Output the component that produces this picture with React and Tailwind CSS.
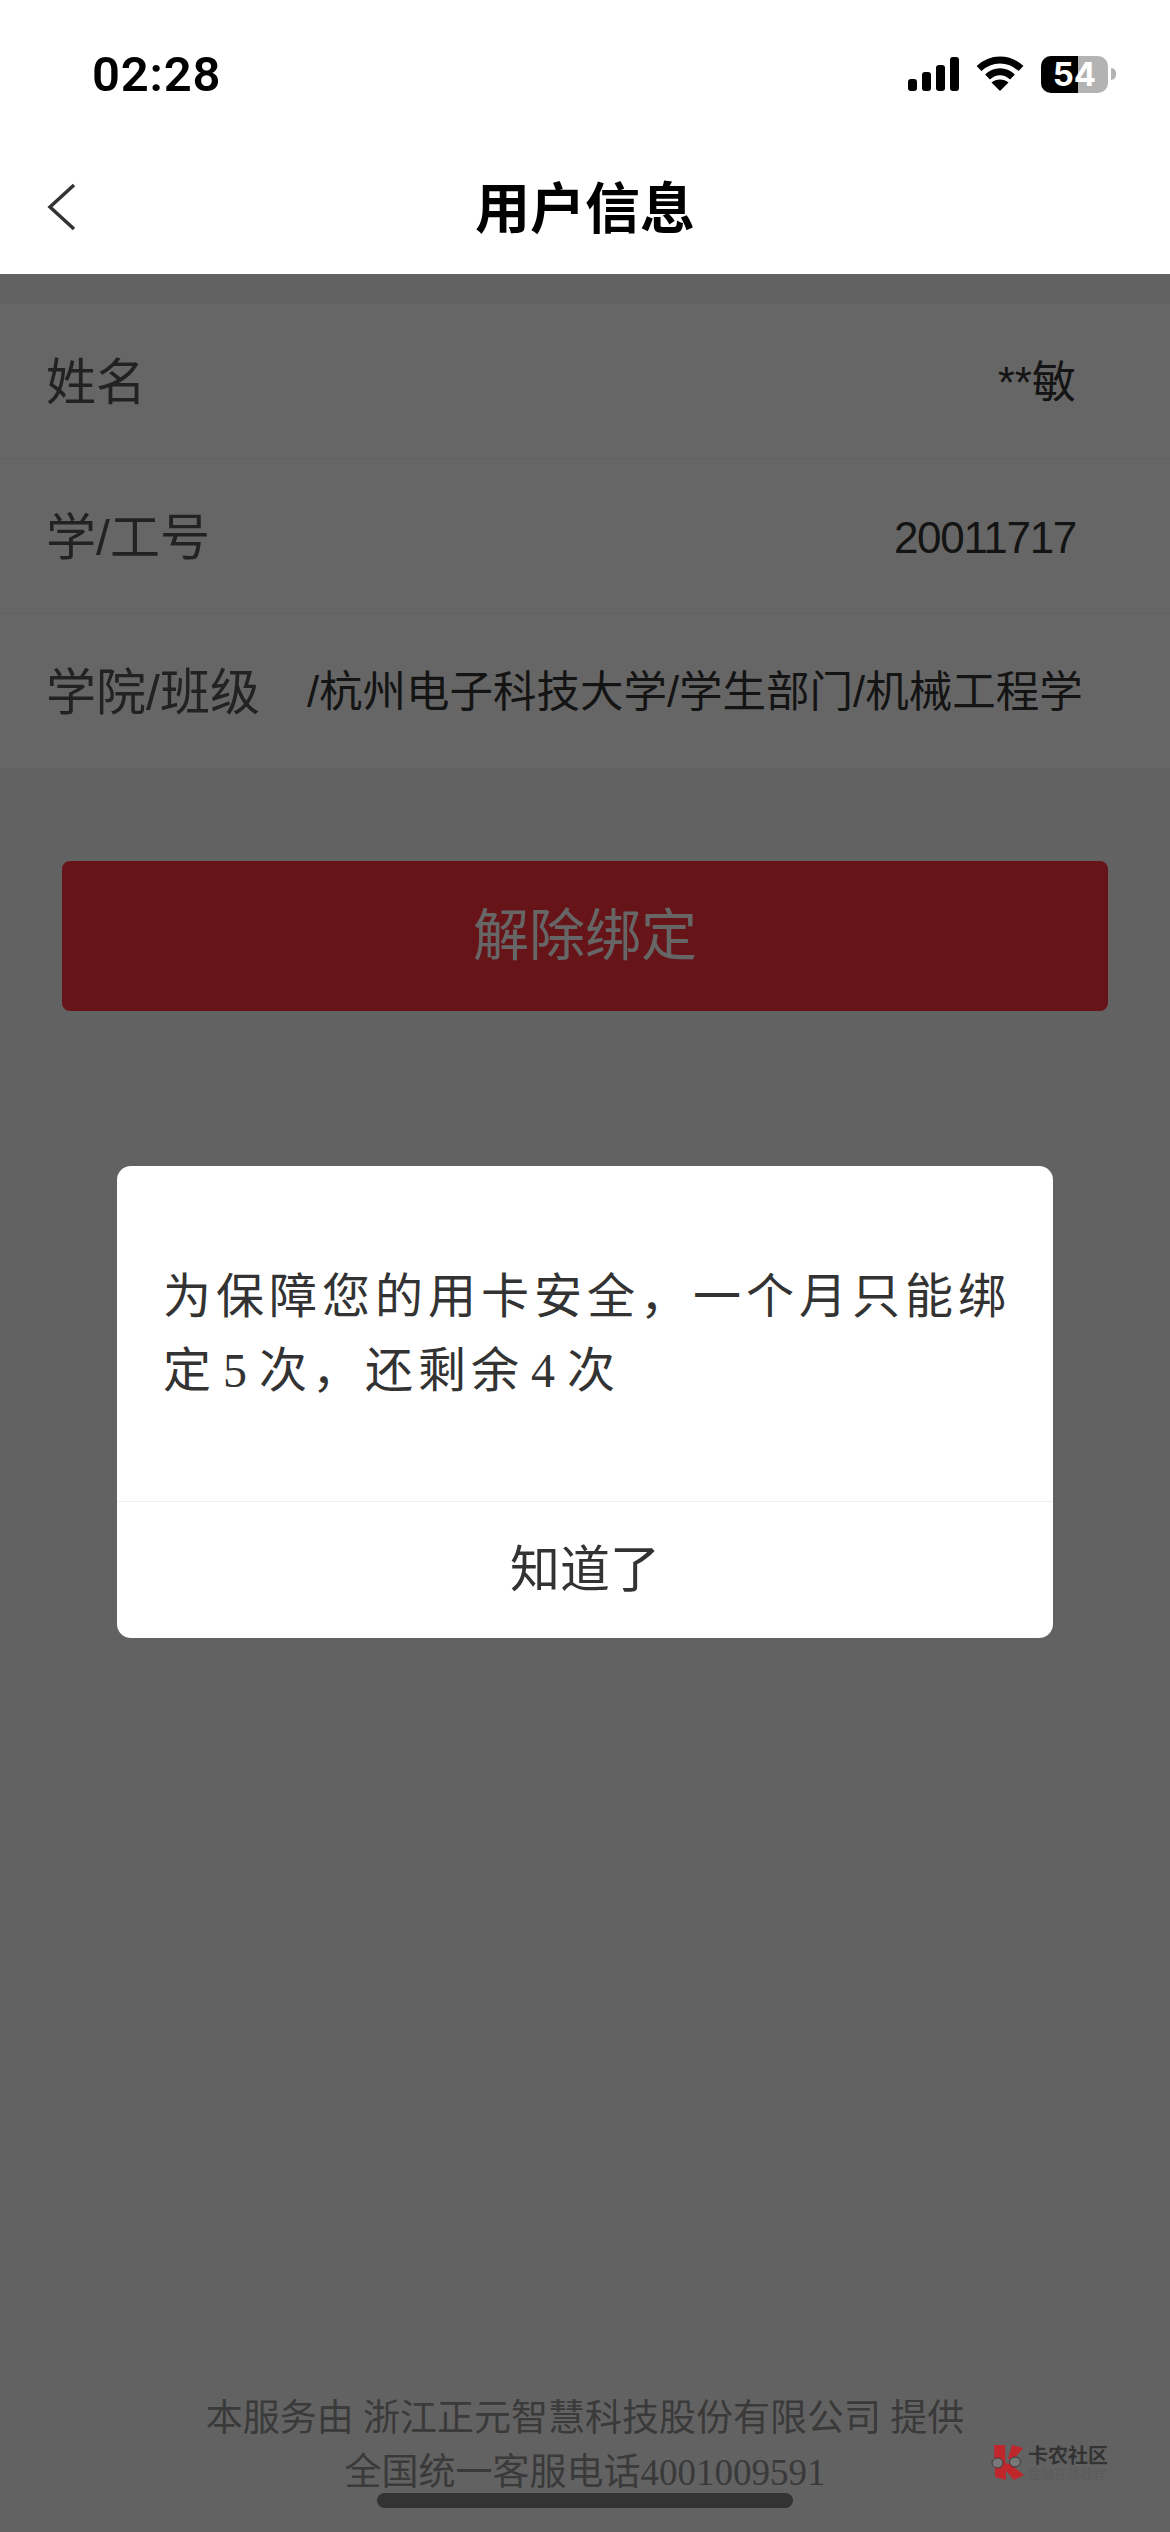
const CJK = 'font-["Liberation_Sans","Noto_Sans_CJK_SC",sans-serif]';

function InfoRow({ label, value, wide, digits }) {
  let valueClass = 'text-[44px] text-[#333]';
  if (wide) valueClass = 'ml-[47px] -mr-[3px] min-w-0 flex-1 whitespace-nowrap text-[43.5px] text-[#333]';
  if (digits) valueClass = 'text-[44px] tracking-[-1.3px] text-[#333]';
  return (
    <div className="flex h-[155px] items-center justify-between border-b border-[#f2f2f2] bg-white pl-[46px] pr-[94px] pt-[4px]">
      <span className="shrink-0 text-[50px] text-[#555]">{label}</span>
      <span className={valueClass}>{value}</span>
    </div>
  );
}

function StatusIcons() {
  return (
    <div className="flex items-center">
      <svg width="51" height="34" viewBox="0 0 51 34" fill="black">
        <rect x="0" y="22" width="9" height="12" rx="3" />
        <rect x="14" y="15" width="9" height="19" rx="3" />
        <rect x="28" y="8" width="9" height="26" rx="3" />
        <rect x="42" y="0" width="9" height="34" rx="3" />
      </svg>
      <svg className="ml-[17px]" width="48" height="36" viewBox="0 0 48 36" fill="none" stroke="black" strokeWidth="7">
        <path d="M3 12.5C15 1 33 1 45 12.5" />
        <path d="M11.5 21C19 14 29 14 36.5 21" />
        <path d="M24 35L15.5 26.5C20 22.5 28 22.5 32.5 26.5Z" fill="black" stroke="none" />
      </svg>
      <div className="relative ml-[17px] flex h-[37px] w-[67px] items-center justify-center rounded-[10px] bg-[#b3b3b3]">
        <div className="absolute inset-y-0 left-0 w-[37px] rounded-l-[10px] bg-black" />
        <span className="relative font-['Inter',sans-serif] text-[33px] font-bold leading-none text-white">54</span>
      </div>
      <div className="ml-[3px] h-[12px] w-[5px] rounded-r-full bg-[#b3b3b3]" />
    </div>
  );
}

function Watermark() {
  return (
    <div className="absolute left-[991px] top-[2444px] flex items-center">
      <svg width="34" height="37" viewBox="0 0 34 37">
        <path d="M3 1H14L15 36L4 33Z" fill="#c0272d" />
        <path d="M17 15L21 1L32 4L23 15Z" fill="#c0272d" />
        <path d="M14 19L19 20L33 31L23 36L14 26Z" fill="#c0272d" />
        <ellipse cx="6.5" cy="19" rx="5.5" ry="5" fill="#787878" stroke="#3a3a3a" strokeWidth="1" />
        <ellipse cx="24" cy="18" rx="5.5" ry="5" fill="#787878" stroke="#3a3a3a" strokeWidth="1" />
      </svg>
      <div className="ml-[3px] flex w-[80px] flex-col">
        <span className="text-[20px] font-bold leading-[22px] text-[#333]">卡农社区</span>
        <span className="text-[13px] leading-[14px] text-[#5c5c5c]">金融在线教程</span>
      </div>
    </div>
  );
}

export default function App() {
  return (
    <div className={`relative flex h-[2532px] w-[1170px] flex-col overflow-hidden bg-white ${CJK}`}>
      {/* status bar + nav stay above the dimmed part */}
      <div className="flex h-[274px] shrink-0 flex-col">
        <div className="flex h-[148px] items-center justify-between pl-[92px] pr-[54px]">
          <span className="font-['Roboto',sans-serif] text-[49px] font-semibold leading-none tracking-[0.8px] text-black">02:28</span>
          <StatusIcons />
        </div>
        <div className="relative flex flex-1 items-center justify-center pb-[4px]">
          <svg className="absolute left-[46px] top-[35px]" width="30" height="48" viewBox="0 0 30 48" fill="none" stroke="#333" strokeWidth="3.5">
            <path d="M28 2L4 24L28 46" />
          </svg>
          <span className="text-[55px] font-bold leading-none text-black">用户信息</span>
        </div>
      </div>

      <div className="relative flex flex-1 flex-col bg-[#f6f6f6] pt-[30px]">
        <InfoRow label="姓名" value="**敏" />
        <InfoRow label="学/工号" value="20011717" digits />
        <InfoRow label="学院/班级" value="/杭州电子科技大学/学生部门/机械工程学" wide />

        <div className="mx-[62px] mt-[92px] flex h-[150px] items-center justify-center rounded-lg bg-[#ff343e] text-[56px] text-white">
          解除绑定
        </div>

        <div className="mt-auto flex flex-col items-center pb-[32px] font-['Liberation_Serif','Noto_Sans_CJK_SC',serif] text-[37px] leading-[54px] text-[#919191]">
          <span>本服务由 浙江正元智慧科技股份有限公司 提供</span>
          <span>全国统一客服电话4001009591</span>
        </div>

        {/* dim layer and dialog */}
        <div className="absolute inset-0 flex items-center justify-center bg-black/60">
          <div className="mb-[2px] w-[936px] rounded-[14px] bg-white text-[#333]">
            <div className="border-b border-[#eee] pb-[93px] pl-[46px] pr-[40px] pt-[94px] font-['Liberation_Serif','Noto_Sans_CJK_SC',serif] text-[48px] leading-[74px] tracking-[5px] [word-spacing:-10px]">
              为保障您的用卡安全，一个月只能绑定 5 次，还剩余 4 次
            </div>
            <div className="flex h-[136px] items-center justify-center text-[50px]">知道了</div>
          </div>
        </div>
      </div>

      <div className="absolute left-[377px] top-[2493px] h-[15px] w-[416px] rounded-full bg-[#333]" />
      <Watermark />
    </div>
  );
}
